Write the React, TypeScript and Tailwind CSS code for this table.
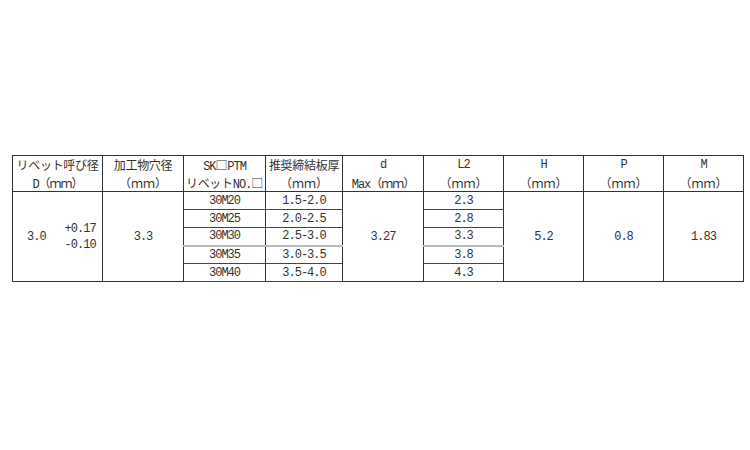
const font = {
  fontFamily: '"Liberation Mono", "Noto Sans CJK JP", monospace',
};

const subRows = [
  { no: "30M20", t: "1.5-2.0", l2: "2.3" },
  { no: "30M25", t: "2.0-2.5", l2: "2.8" },
  { no: "30M30", t: "2.5-3.0", l2: "3.3" },
  { no: "30M35", t: "3.0-3.5", l2: "3.8" },
  { no: "30M40", t: "3.5-4.0", l2: "4.3" },
];

const jp = "font-['Noto_Sans_CJK_JP',sans-serif] text-[12px] tracking-[-0.3px] leading-[16px]";
const num = "font-['Liberation_Mono',monospace] text-[12px] tracking-[-1px] leading-[16px]";
const mm = <span className="font-['Noto_Sans_CJK_JP',sans-serif] text-[12px] leading-[16px]">（ｍｍ）</span>;

function Head({ top, bottom }: { top: React.ReactNode; bottom: React.ReactNode }) {
  return (
    <th className="border border-[#333] p-0 pt-[1px] align-top font-normal text-[#333] text-[12px]">
      <div className="h-[16px] leading-[16px]">{top}</div>
      <div className="h-[16px] leading-[16px] mt-[2px]">{bottom}</div>
    </th>
  );
}

export default function App() {
  return (
    <div className="w-[750px] h-[450px] bg-white pt-[155px] pl-[12px]" style={font}>
      <table className="table-fixed border-collapse w-[731px] border border-[#222] text-center text-[#333]">
        <colgroup>
          <col className="w-[90px]" />
          <col className="w-[81px]" />
          <col className="w-[82px]" />
          <col className="w-[77px]" />
          <col className="w-[81px]" />
          <col className="w-[80px]" />
          <col className="w-[80px]" />
          <col className="w-[80px]" />
          <col className="w-[80px]" />
        </colgroup>
        <thead>
          <tr className="h-[34px]">
            <Head
              top={<span className={jp}>リベット呼び径</span>}
              bottom={<span className={num}>D{mm}</span>}
            />
            <Head top={<span className={jp}>加工物穴径</span>} bottom={mm} />
            <Head
              top={<span className={num}>SK<span className={jp}>□</span>PTM</span>}
              bottom={
                <span>
                  <span className={jp}>リベット</span>
                  <span className={num}>NO.</span>
                  <span className={jp}>□</span>
                </span>
              }
            />
            <Head top={<span className={jp}>推奨締結板厚</span>} bottom={mm} />
            <Head
              top={<span className={num}>d</span>}
              bottom={<span className={num}>Max{mm}</span>}
            />
            <Head top={<span className={num}>L2</span>} bottom={mm} />
            <Head top={<span className={num}>H</span>} bottom={mm} />
            <Head top={<span className={num}>P</span>} bottom={mm} />
            <Head top={<span className={num}>M</span>} bottom={mm} />
          </tr>
        </thead>
        <tbody>
          {subRows.map((r, i) => {
            const line =
              i === 2
                ? "border-b-2 border-b-[#bbb]"
                : "border-b border-b-[#444]";
            return (
              <tr key={r.no} className="h-[18px]">
                {i === 0 && (
                  <>
                    <td rowSpan={5} className="border border-[#333] p-0 align-middle">
                      <div className="flex items-center pl-[14px]">
                        <span className={num}>3.0</span>
                        <div className="ml-[19px] flex flex-col items-end">
                          <span className={`${num} leading-[15px]`}>+0.17</span>
                          <span className={`${num} leading-[15px]`}>-0.10</span>
                        </div>
                      </div>
                    </td>
                    <td rowSpan={5} className={`border border-[#333] p-0 ${num}`}>3.3</td>
                  </>
                )}
                <td className={`border-x border-[#333] p-0 ${line} ${num}`}>{r.no}</td>
                <td className={`border-x border-[#333] p-0 ${line} ${num}`}>{r.t}</td>
                {i === 0 && (
                  <td rowSpan={5} className={`border border-[#333] p-0 ${num}`}>3.27</td>
                )}
                <td className={`border-x border-[#333] p-0 ${line} ${num}`}>{r.l2}</td>
                {i === 0 && (
                  <>
                    <td rowSpan={5} className={`border border-[#333] p-0 ${num}`}>5.2</td>
                    <td rowSpan={5} className={`border border-[#333] p-0 ${num}`}>0.8</td>
                    <td rowSpan={5} className={`border border-[#333] p-0 ${num}`}>1.83</td>
                  </>
                )}
              </tr>
            );
          })}
        </tbody>
      </table>
    </div>
  );
}
